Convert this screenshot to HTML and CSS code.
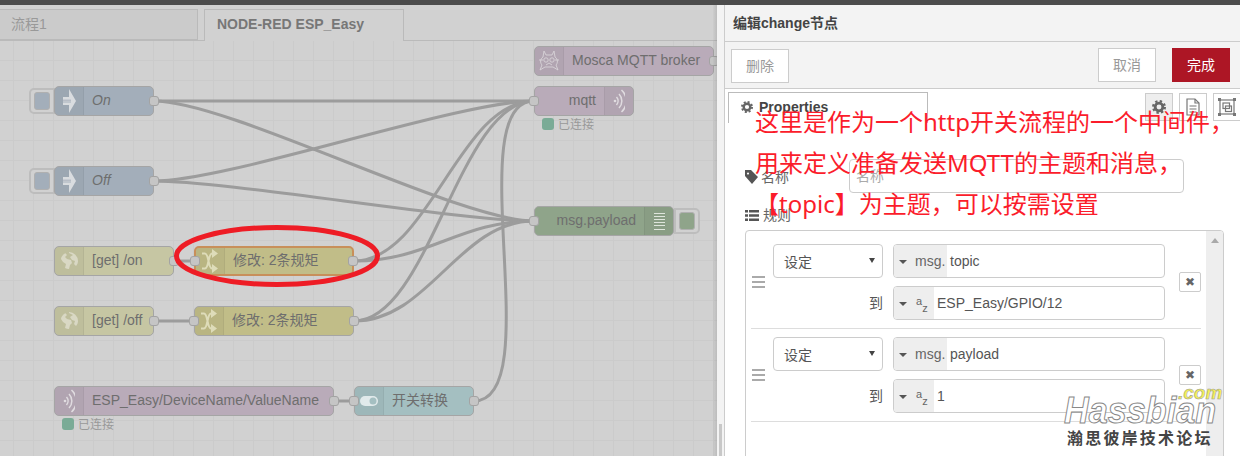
FILE: index.html
```html
<!DOCTYPE html>
<html lang="zh">
<head>
<meta charset="utf-8">
<title>Node-RED</title>
<link rel="stylesheet" href="styles.css">
</head>
<body>
<svg class="defs" width="0" height="0" aria-hidden="true">
  <defs>
    <symbol id="i-gear" viewBox="0 0 12 12">
      <circle cx="6" cy="6" r="3.3" fill="none" stroke="currentColor" stroke-width="2.4"/>
      <circle cx="6" cy="6" r="5" fill="none" stroke="currentColor" stroke-width="2" stroke-dasharray="2 1.93"/>
    </symbol>
    <symbol id="i-inject" viewBox="0 0 13 24">
      <path d="M0 8H6V0L13 12 6 24V16H0Z" fill="#d9dcdf"/>
      <path d="M0 11.2H8M0 13H8" stroke="#9aa5b1" stroke-width=".8"/>
    </symbol>
    <symbol id="i-globe" viewBox="0 0 20 20">
      <path d="M10 1a9 9 0 0 1 9 9c0 2-1 4-2 5l-2-2 1-3-3-1-2-3 3-2-4-2Zm-4 1 2 2-2 2 2 2 4 1 1 3-2 2-1 4a9 9 0 0 1-4-1l1-4-3-2-2-3c0-2 2-5 5-6Z" fill="#d9d8c4"/>
    </symbol>
    <symbol id="i-shuffle" viewBox="0 0 16 24">
      <path d="M0 4.500H3C7 4.500 6 19.500 10 19.500H11M0 19.500H3C7 19.500 6 4.500 10 4.500H11" fill="none" stroke="#dedcb9" stroke-width="2"/>
      <path d="M10 0 16 4.500 10 9ZM10 15 16 19.500 10 24Z" fill="#dedcb9"/>
    </symbol>
    <symbol id="i-wifi" viewBox="0 0 12 24">
      <circle cx="2" cy="12" r="1.300" fill="#e0dce0"/>
      <path d="M3.500 8a6 6 0 0 1 0 8M6 5a10 10 0 0 1 0 14M8.500 1a15 15 0 0 1 0 22" fill="none" stroke="#e0dce0" stroke-width="1.500"/>
    </symbol>
  </defs>
</svg>

<header class="topbar"></header>

<main class="workspace">
  <section class="editor">
    <nav class="flow-tabs">
      <div class="flow-tab flow-tab-first">流程1</div>
      <div class="flow-tab flow-tab-active">NODE-RED ESP_Easy</div>
    </nav>
    <div class="canvas">
      <svg class="wires" width="716" height="415" viewBox="0 41 716 415">
        <g fill="none" stroke="#9c9c9c" stroke-width="3">
          <path d="M154 101H534"/>
          <path d="M154 101C229 101 459 221 534 221"/>
          <path d="M154 181C229 181 459 101 534 101"/>
          <path d="M154 181C229 181 459 221 534 221"/>
          <path d="M174 261H194"/>
          <path d="M354 261C429 261 459 101 534 101"/>
          <path d="M354 261C429 261 459 221 534 221"/>
          <path d="M154 321H194"/>
          <path d="M354 321C429 321 459 101 534 101"/>
          <path d="M354 321C429 321 459 221 534 221"/>
          <path d="M334 401H354"/>
          <path d="M474 401C549 401 459 101 534 101"/>
        </g>
      </svg>

      <div class="node node-mosca c-mqtt">
        <span class="node-icon">
          <svg width="20" height="22" viewBox="0 0 20 22"><g fill="none" stroke="#d8d4d8" stroke-width=".9"><path d="M5 1 7 5H13L15 1 16 7C19 9 19 13 17 15L19 20 14 17H6L1 20 3 15C1 13 1 9 4 7Z"/><circle cx="7" cy="10" r="2.200"/><circle cx="13" cy="10" r="2.200"/><path d="M7 15 10 13 13 15M0 10H4M16 10H20"/></g></svg>
        </span>
        <span class="node-label">Mosca MQTT broker</span>
        <i class="port port-out"></i>
      </div>

      <div class="node node-mqtt-out c-mqtt icon-right">
        <span class="node-label">mqtt</span>
        <span class="node-icon"><svg width="12" height="24"><use href="#i-wifi"/></svg></span>
        <i class="port port-in"></i>
        <div class="status"><b></b>已连接</div>
      </div>

      <div class="side-btn side-left btn-on"><b class="c-inject"></b></div>
      <div class="node node-on c-inject">
        <span class="node-icon"><svg width="13" height="24"><use href="#i-inject"/></svg></span>
        <span class="node-label label-em">On</span>
        <i class="port port-out"></i>
      </div>

      <div class="side-btn side-left btn-off"><b class="c-inject"></b></div>
      <div class="node node-off c-inject">
        <span class="node-icon"><svg width="13" height="24"><use href="#i-inject"/></svg></span>
        <span class="node-label label-em">Off</span>
        <i class="port port-out"></i>
      </div>

      <div class="side-btn side-right btn-debug"><b class="c-debug"></b></div>
      <div class="node node-debug c-debug icon-right">
        <span class="node-label">msg.payload</span>
        <span class="node-icon">
          <svg width="11" height="19" viewBox="0 0 11 19"><path d="M0 1.500H11M0 4.500H11M0 7.500H11M0 10.500H11M0 13.500H11M0 17.500H11" stroke="#dfe5dc"/></svg>
        </span>
        <i class="port port-in"></i>
      </div>

      <div class="node node-get-on c-http">
        <span class="node-icon"><svg width="20" height="20"><use href="#i-globe"/></svg></span>
        <span class="node-label">[get] /on</span>
        <i class="port port-out"></i>
      </div>

      <div class="node node-ch1 c-change node-selected">
        <span class="node-icon"><svg width="16" height="24"><use href="#i-shuffle"/></svg></span>
        <span class="node-label">修改: 2条规矩</span>
        <i class="port port-in"></i><i class="port port-out"></i>
      </div>

      <div class="node node-get-off c-http">
        <span class="node-icon"><svg width="20" height="20"><use href="#i-globe"/></svg></span>
        <span class="node-label">[get] /off</span>
        <i class="port port-out"></i>
      </div>

      <div class="node node-ch2 c-change">
        <span class="node-icon"><svg width="16" height="24"><use href="#i-shuffle"/></svg></span>
        <span class="node-label">修改: 2条规矩</span>
        <i class="port port-in"></i><i class="port port-out"></i>
      </div>

      <div class="node node-esp c-mqtt">
        <span class="node-icon"><svg width="12" height="24"><use href="#i-wifi"/></svg></span>
        <span class="node-label">ESP_Easy/DeviceName/ValueName</span>
        <i class="port port-out"></i>
        <div class="status"><b></b>已连接</div>
      </div>

      <div class="node node-switch c-switch">
        <span class="node-icon">
          <svg width="18" height="10" viewBox="0 0 18 10"><rect width="18" height="10" rx="5" fill="#e1eaeb"/><circle cx="13" cy="5" r="3.500" fill="#a4bfc1"/></svg>
        </span>
        <span class="node-label">开关转换</span>
        <i class="port port-in"></i><i class="port port-out"></i>
      </div>

      <svg class="ring" width="216" height="70" viewBox="0 0 216 70"><ellipse cx="108" cy="35" rx="100.500" ry="28.500" fill="none" stroke="#ee1c25" stroke-width="5"/></svg>
    </div>
  </section>

  <div class="divider"><span class="divider-grip"></span></div>

  <aside class="tray">
    <div class="tray-title">编辑change节点</div>
    <div class="tray-toolbar">
      <button class="btn btn-delete">删除</button>
      <div class="tray-actions">
        <button class="btn">取消</button>
        <button class="btn btn-primary">完成</button>
      </div>
    </div>
    <div class="tray-tabs">
      <div class="tray-tab"><svg class="tab-gear" width="12" height="12"><use href="#i-gear"/></svg>Properties</div>
      <div class="tab-icons">
        <span class="tab-icon tab-icon-on"><svg width="14" height="14"><use href="#i-gear"/></svg></span>
        <span class="tab-icon">
          <svg width="14" height="18" viewBox="0 0 14 18"><g fill="none" stroke="#777" stroke-width="1.200"><path d="M1 1H9L13 5V17H1Z"/><path d="M9 1V5H13M3.500 8H10.500M3.500 11H10.500M3.500 14H10.500"/></g></svg>
        </span>
        <span class="tab-icon">
          <svg width="18" height="18" viewBox="0 0 18 18"><g fill="none" stroke="#777" stroke-width="1.200"><rect x="2" y="2" width="14" height="14"/><rect x="5" y="5" width="6.500" height="5.500"/><rect x="7.500" y="8" width="6" height="5.500"/></g><g fill="#777"><rect width="3" height="3"/><rect x="15" width="3" height="3"/><rect y="15" width="3" height="3"/><rect x="15" y="15" width="3" height="3"/></g></svg>
        </span>
      </div>
    </div>

    <div class="form">
      <div class="form-row">
        <label class="form-label">
          <svg width="13" height="15" viewBox="0 0 13 15"><path d="M0 1H6L13 8 7 15 0 7ZM3 3.500a1 1 0 1 0 .01 0Z" fill="#555" fill-rule="evenodd"/></svg>
          名称
        </label>
        <div class="text-input placeholder">名称</div>
      </div>
      <div class="rules-label">
        <svg width="14" height="11" viewBox="0 0 14 11"><path d="M0 0H3V2.500H0ZM4 0H14V2.500H4ZM0 4.200H3V6.700H0ZM4 4.200H14V6.700H4ZM0 8.400H3V11H0ZM4 8.400H14V11H4Z" fill="#555"/></svg>
        规则
      </div>
      <div class="rules-box">
        <div class="rules">
          <div class="rule">
            <div class="handle"><i></i><i></i><i></i></div>
            <div class="select">设定<i class="select-arrow"></i></div>
            <div class="typed"><span class="typed-type"><i class="caret"></i>msg.</span><span class="typed-value">topic</span></div>
            <button class="rule-del">✖</button>
            <div class="to-label">到</div>
            <div class="typed"><span class="typed-type type-str"><i class="caret"></i><span class="az"><i>a</i><i>z</i></span></span><span class="typed-value">ESP_Easy/GPIO/12</span></div>
          </div>
          <div class="rule">
            <div class="handle"><i></i><i></i><i></i></div>
            <div class="select">设定<i class="select-arrow"></i></div>
            <div class="typed"><span class="typed-type"><i class="caret"></i>msg.</span><span class="typed-value">payload</span></div>
            <button class="rule-del">✖</button>
            <div class="to-label">到</div>
            <div class="typed"><span class="typed-type type-str"><i class="caret"></i><span class="az"><i>a</i><i>z</i></span></span><span class="typed-value">1</span></div>
          </div>
        </div>
        <div class="scroll-track"><i class="scroll-up"></i></div>
      </div>
    </div>
  </aside>
</main>

<div class="annotation">这里是作为一个http开关流程的一个中间件，<br>用来定义准备发送MQTT的主题和消息，<br>【topic】为主题，可以按需设置</div>

<div class="watermark">
  <span class="wm-com">.com</span>
  <span class="wm-name">Hassbian</span>
  <span class="wm-cn">瀚思彼岸技术论坛</span>
</div>
</body>
</html>
```

FILE: styles.css
```css
* { box-sizing: border-box; }
html, body { margin: 0; padding: 0; }
body {
  position: relative;
  width: 1240px;
  height: 456px;
  overflow: hidden;
  display: flex;
  flex-direction: column;
  background: #d1d1d1;
  font-family: "Liberation Sans", "Noto Sans CJK SC", sans-serif;
  font-size: 14px;
}
.defs { position: absolute; }
.topbar { height: 5px; flex: none; background: #4c4c4c; }
.workspace { flex: 1; display: flex; min-height: 0; }

/* editor */
.editor { width: 717px; flex: none; display: flex; flex-direction: column; overflow: hidden; position: relative; }
.editor::after {
  content: ""; position: absolute; top: 0; bottom: 0; right: 0; width: 4px;
  background: linear-gradient(to right, rgba(0,0,0,.02), rgba(0,0,0,.1));
}
.flow-tabs {
  height: 36px; flex: none; padding-top: 4px; display: flex; gap: 6px;
  border-bottom: 1px solid #bababa; background: #d1d1d1;
}
.flow-tab { height: 32px; padding: 5px 0 0 12px; border: 1px solid #bababa; line-height: 18px; }
.flow-tab-first { width: 198px; padding-left: 11px; background: #cbcbcb; color: #999; border-left: 0; border-bottom: 1px solid #bababa; height: 31px; }
.flow-tab-active { width: 200px; background: #d1d1d1; color: #777; font-weight: bold; border-bottom: 0; }
.canvas {
  flex: 1; position: relative; overflow: hidden;
  background-color: #d1d1d1;
  background-image: linear-gradient(#cbcbcb 1px, transparent 1px), linear-gradient(90deg, #cbcbcb 1px, transparent 1px);
  background-size: 20px 20px;
  background-position: 13px 19px;
}
.wires { position: absolute; left: 0; top: 0; }
.ring { position: absolute; left: 169px; top: 180px; }

.node {
  position: absolute; height: 30px; display: flex; align-items: center;
  border: 1px solid #a5a5a5; border-radius: 5px; color: #6e6e6e; line-height: 26px;
}
.node-icon {
  width: 29px; height: 100%; flex: none; display: flex; align-items: center; justify-content: center;
  background: rgba(0,0,0,.04); border-right: 1px solid rgba(0,0,0,.05); border-radius: 4px 0 0 4px;
}
.node-label { padding: 0 0 2px 8px; white-space: nowrap; }
.label-em { font-style: italic; }
.icon-right { justify-content: flex-end; }
.icon-right .node-icon { border-right: 0; border-left: 1px solid rgba(0,0,0,.05); border-radius: 0 4px 4px 0; }
.icon-right .node-label { padding: 0 8px 2px 0; }
.node-selected { border: 2px solid #c88f5a; }
.node-selected .port-in { left: -6px; top: 8px; }
.node-selected .port-out { right: -6px; top: 8px; }

.c-inject { background: #a3aeba; }
.c-http { background: #c6c6a3; }
.c-change { background: #c1bd88; }
.c-mqtt { background: #b9abb9; }
.c-switch { background: #a4bfc1; }
.c-debug { background: #8fa48a; }

.node-mosca { left: 534px; top: 5px; width: 180px; }
.node-mqtt-out { left: 534px; top: 45px; width: 100px; }
.node-on { left: 54px; top: 45px; width: 100px; }
.node-off { left: 54px; top: 125px; width: 100px; }
.node-debug { left: 534px; top: 165px; width: 140px; }
.node-get-on { left: 54px; top: 205px; width: 120px; }
.node-ch1 { left: 194px; top: 205px; width: 160px; }
.node-get-off { left: 54px; top: 265px; width: 100px; }
.node-ch2 { left: 194px; top: 265px; width: 160px; }
.node-esp { left: 54px; top: 345px; width: 280px; }
.node-switch { left: 354px; top: 345px; width: 120px; }

.port {
  position: absolute; top: 9px; width: 10px; height: 10px;
  background: #c5c5c5; border: 1px solid #a3a3a3; border-radius: 3px;
}
.port-in { left: -6px; }
.port-out { right: -6px; }

.status {
  position: absolute; left: 7px; top: 31px; display: flex; align-items: flex-start; gap: 4px;
  font-size: 12px; line-height: 15px; color: #999; white-space: nowrap;
}
.status b { width: 12px; height: 12px; border-radius: 3px; background: #7aab96; }

.side-btn {
  position: absolute; width: 26px; height: 26px; border: 2px solid #bdbdbd; background: #d1d1d1;
  display: flex; align-items: center;
}
.side-btn b { width: 16px; height: 18px; border-radius: 3px; border: 1px solid #b0b0b0; }
.side-left { border-radius: 5px 0 0 5px; padding-left: 3px; }
.side-right { border-radius: 0 5px 5px 0; padding-left: 3px; }
.btn-on { left: 29px; top: 47px; }
.btn-off { left: 29px; top: 127px; }
.btn-debug { left: 674px; top: 167px; }

/* divider */
.divider { width: 7px; flex: none; background: #f3f3f3; position: relative; }
.divider-grip { position: absolute; left: 2px; bottom: 0; width: 3px; height: 32px; background: #c8c8c8; }

/* tray */
.tray { flex: 1; min-width: 0; overflow: hidden; background: #fff; border-left: 1px solid #ccc; }
.tray-title {
  height: 37px; padding-left: 8px; background: #f3f3f3; border-bottom: 1px solid #ccc;
  font-weight: bold; color: #444; line-height: 36px;
}
.tray-toolbar {
  height: 47px; padding: 6px 10px 0 6px; background: #f3f3f3; border-bottom: 1px solid #ccc;
  display: flex; justify-content: space-between; align-items: flex-start;
}
.tray-actions { display: flex; gap: 16px; }
.btn {
  width: 58px; height: 34px; padding: 0; border: 1px solid #ccc; background: #fff; color: #999;
  font: inherit; line-height: 32px;
}
.btn-delete { margin-top: 1px; }
.btn-primary { background: #ad1625; border-color: #ad1625; color: #fff; }
.tray-tabs { height: 34px; padding-top: 3px; display: flex; justify-content: space-between; }
.tray-tab {
  width: 200px; height: 31px; margin-left: 3px; padding: 5px 0 0 12px;
  border: 1px solid #bbb; border-bottom: 0; font-weight: bold; color: #444; line-height: 18px;
}
.tab-gear { margin-right: 6px; vertical-align: -1px; color: #666; }
.tab-icons { display: flex; gap: 6px; margin-right: -1px; padding-top: 1px; }
.tab-icon {
  width: 28px; height: 28px; border: 1px solid #ccc; background: #fff;
  display: flex; align-items: center; justify-content: center;
}
.tab-icon-on { background: #eee; color: #666; }

.form { padding: 36px 0 0 20px; color: #666; }
.form-row { display: flex; align-items: center; }
.form-label { width: 104px; display: flex; align-items: center; gap: 3px; }
.text-input { width: 335px; height: 34px; padding-left: 6px; border: 1px solid #ccc; border-radius: 4px; line-height: 32px; }
.placeholder { color: #aaa; }
.rules-label { margin-top: 14px; height: 16px; display: flex; align-items: center; gap: 4px; line-height: 16px; }
.rules-box {
  width: 479px; height: 300px; margin-top: 7px; border: 1px solid #ccc; border-radius: 4px;
  display: flex; overflow: hidden;
}
.rules { flex: 1; padding: 5px 5px 0; }
.scroll-track { width: 17px; flex: none; background: #eee; position: relative; }
.scroll-up {
  position: absolute; left: 5px; top: 7px; width: 0; height: 0;
  border: 4px solid transparent; border-top: 0; border-bottom: 5px solid #a9a9a9;
}
.rule {
  display: grid; grid-template-columns: 22px 110px 282px 36px; grid-template-rows: 34px 34px;
  row-gap: 8px; padding: 8px 0; border-bottom: 1px solid #ddd; color: #555;
}
.handle { grid-row: 1 / span 2; grid-column: 1; align-self: center; display: flex; flex-direction: column; gap: 3px; }
.handle i { display: block; width: 13px; height: 2px; margin-left: 1px; background: #aaa; }
.select {
  grid-column: 2; grid-row: 1; position: relative; padding-left: 10px;
  border: 1px solid #ccc; border-radius: 4px; line-height: 34px; background: #fff;
}
.select-arrow {
  position: absolute; right: 7px; top: 13px; width: 0; height: 0;
  border: 3px solid transparent; border-bottom: 0; border-top: 5px solid #444;
}
.typed {
  grid-column: 3; grid-row: 1; margin-left: 10px; width: 272px; display: flex; overflow: hidden;
  border: 1px solid #ccc; border-radius: 4px; line-height: 32px;
}
.to-label { grid-column: 2; grid-row: 2; text-align: right; line-height: 34px; color: #555; }
.to-label + .typed { grid-row: 2; }
.typed-type { width: 53px; flex: none; display: flex; align-items: center; padding-left: 5px; background: #eee; white-space: nowrap; color: #666; }
.type-str { width: 40px; }
.caret {
  width: 0; height: 0; margin-right: 8px; margin-top: 1px;
  border: 4px solid transparent; border-bottom: 0; border-top: 4px solid #555;
}
.typed-value { padding-left: 3px; color: #555; }
.az { display: inline-flex; height: 100%; margin-left: 1px; padding-top: 9px; font-size: 11px; line-height: 10px; }
.az i { font-style: normal; }
.az i:last-child { margin-top: 7px; }
.rule-del {
  grid-column: 4; grid-row: 1 / span 2; justify-self: end; align-self: center;
  width: 22px; height: 20px; padding: 0; border: 1px solid #ccc; border-radius: 2px; background: #fff;
  color: #666; font: bold 12px/18px "DejaVu Sans", sans-serif;
}

/* overlays */
.annotation {
  position: absolute; left: 755px; top: 101px; width: 490px;
  font-family: "Noto Sans", "Noto Sans CJK SC", sans-serif; font-size: 24px; line-height: 41px;
  color: #fb1c2b; white-space: nowrap;
}
.watermark { position: absolute; left: 1060px; top: 384px; width: 170px; height: 66px; }
.watermark span { position: absolute; white-space: nowrap; }
.wm-com {
  left: 118px; top: -1px; font: italic bold 19px/20px "Liberation Sans", sans-serif;
  color: #f4ef55; -webkit-text-stroke: .5px #999;
}
.wm-name {
  left: 4px; top: 9px; font: italic bold 36px/36px "Liberation Sans", sans-serif;
  color: #fff; -webkit-text-stroke: 1px #888; transform: scaleX(.95); transform-origin: left center;
}
.wm-cn {
  left: 7px; top: 43px; font: bold 16px/20px "Noto Sans CJK SC", sans-serif; letter-spacing: 2.200px; color: #444;
}
```
